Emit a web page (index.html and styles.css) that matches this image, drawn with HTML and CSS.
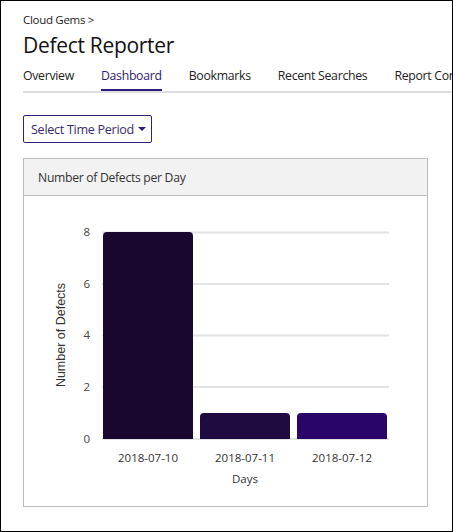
FILE: index.html
```html
<!DOCTYPE html>
<html>
<head>
<meta charset="utf-8">
<link rel="stylesheet" href="styles.css">
</head>
<body>
<div class="frame">
  <div class="crumb">Cloud Gems &gt;</div>
  <h1 class="title">Defect Reporter</h1>
  <nav class="tabs">
    <span class="tab">Overview</span>
    <span class="tab active">Dashboard</span>
    <span class="tab">Bookmarks</span>
    <span class="tab">Recent Searches</span>
    <span class="tab">Report Configuration</span>
  </nav>
  <button class="select">Select Time Period<span class="caret"></span></button>
  <section class="card">
    <div class="card-head">Number of Defects per Day</div>
    <div class="card-body">
      <svg class="chart" width="403" height="309" viewBox="0 0 403 309">
        <g class="grid">
          <line x1="78" y1="36.5" x2="365" y2="36.5"/>
          <line x1="78" y1="88" x2="365" y2="88"/>
          <line x1="78" y1="139.5" x2="365" y2="139.5"/>
          <line x1="78" y1="191" x2="365" y2="191"/>
          <line x1="78" y1="243" x2="365" y2="243"/>
        </g>
        <g class="yticks">
          <text x="66" y="40">8</text>
          <text x="66" y="91.5">6</text>
          <text x="66" y="143">4</text>
          <text x="66" y="195">2</text>
          <text x="66" y="246.5">0</text>
        </g>
        <path class="bar1" d="M79 243 V40 Q79 36 83 36 H165 Q169 36 169 40 V243 Z"/>
        <path class="bar2" d="M176 243 V221 Q176 217 180 217 H262 Q266 217 266 221 V243 Z"/>
        <path class="bar3" d="M273 243 V221 Q273 217 277 217 H359 Q363 217 363 221 V243 Z"/>
        <g class="xticks">
          <text x="124" y="266">2018-07-10</text>
          <text x="221" y="266">2018-07-11</text>
          <text x="318" y="266">2018-07-12</text>
        </g>
        <text class="xlabel" x="221" y="287">Days</text>
        <text class="ylabel" transform="translate(41 139) rotate(-90)">Number of Defects</text>
      </svg>
    </div>
  </section>
</div>
</body>
</html>
```

FILE: styles.css
```css
* { box-sizing: border-box; }
html, body { margin: 0; padding: 0; background: #fff; }
body { font-family: "Open Sans", "Noto Sans", sans-serif; color: #222; }

.frame {
  width: 453px;
  height: 532px;
  border: 1px solid #000;
  padding: 11px 0 0 22px;
  overflow: hidden;
}

.crumb {
  font-size: 11.5px;
  line-height: 16px;
  letter-spacing: -0.3px;
  color: #222;
}

.title {
  margin: 2px 0 0;
  font-size: 21px;
  font-weight: 400;
  line-height: 30px;
  letter-spacing: -0.3px;
  color: #111;
}

.tabs {
  display: flex;
  gap: 27px;
  margin-top: 5px;
  border-bottom: 2px solid #e0e0e0;
  white-space: nowrap;
  font-size: 12.3px;
  letter-spacing: -0.3px;
  overflow: hidden;
}
.tab {
  padding: 2px 0 5px;
  border-bottom: 3px solid transparent;
  margin-bottom: -1px;
  color: #222;
  flex: none;
}
.tab.active {
  color: #2d1d6e;
  border-bottom-color: #2d1a7c;
}

.select {
  display: flex;
  align-items: center;
  gap: 4px;
  margin-top: 22px;
  height: 28px;
  padding: 0 5px 0 7px;
  background: #fff;
  border: 1px solid #34207a;
  border-radius: 2px;
  font-family: inherit;
  font-size: 12.6px;
  letter-spacing: -0.3px;
  color: #3a2a70;
}
.caret {
  width: 0;
  height: 0;
  border-left: 4px solid transparent;
  border-right: 4px solid transparent;
  border-top: 4px solid #2d1a7c;
}

.card {
  margin-top: 15px;
  width: 405px;
  height: 349px;
  border: 1px solid #bdbdbd;
}
.card-head {
  height: 37px;
  background: #f2f2f2;
  border-bottom: 1px solid #bdbdbd;
  padding: 10px 0 0 14px;
  font-size: 12.2px;
  letter-spacing: -0.3px;
  color: #333;
}
.card-body { height: 310px; }
.chart { display: block; }

.grid line { stroke: #e3e3e3; stroke-width: 2; }
.yticks text {
  font-family: "Open Sans", sans-serif;
  font-size: 11.5px;
  fill: #444;
  text-anchor: end;
}
.xticks text, .xlabel {
  font-family: "Open Sans", sans-serif;
  font-size: 11.5px;
  fill: #333;
  text-anchor: middle;
}
.ylabel {
  font-family: "Liberation Sans", Arial, sans-serif;
  font-size: 12.5px;
  fill: #333;
  text-anchor: middle;
}
.bar1 { fill: #1a072f; }
.bar2 { fill: #1f0b3f; }
.bar3 { fill: #29056a; }
```
